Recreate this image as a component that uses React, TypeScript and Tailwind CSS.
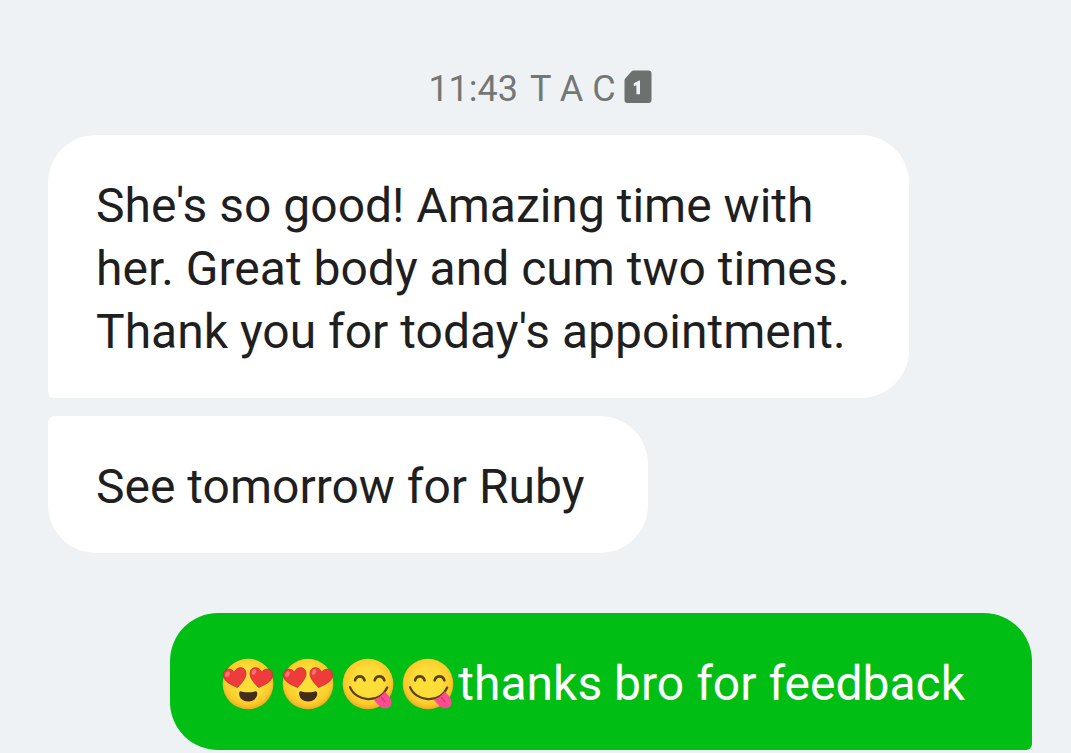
import type { ReactNode } from "react"
import { clsx } from "clsx"

type Emoji = "hearts" | "yum"

type Message = {
  id: number
  side: "in" | "out"
  lines: string[]
  emojis?: Emoji[]
  shape: string
}

const messages: Message[] = [
  {
    id: 1,
    side: "in",
    lines: [
      "She's so good! Amazing time with",
      "her. Great body and cum two times.",
      "Thank you for today's appointment.",
    ],
    shape: "rounded-[48px] rounded-bl-[6px] pr-[59px]",
  },
  {
    id: 2,
    side: "in",
    lines: ["See tomorrow for Ruby"],
    shape: "mt-[18px] rounded-[48px] rounded-tl-[6px] pr-16",
  },
  {
    id: 3,
    side: "out",
    lines: ["thanks bro for feedback"],
    emojis: ["hearts", "hearts", "yum", "yum"],
    shape: "mt-[60px] rounded-[48px] rounded-br-[6px] pr-[67px]",
  },
]

function SimIcon() {
  return (
    <svg viewBox="0 0 28 34" className="h-[34px] w-7" role="img" aria-label="SIM 1">
      <path d="M9.5 0.5H24.5Q27.5 0.5 27.5 3.5V30Q27.5 33 24.5 33H3.5Q0.5 33 0.5 30V10.5Q0.5 9.2 1.5 8.2L7.4 1.6Q8.3 0.5 9.5 0.5Z" fill="#6c706f" />
      <path d="M9.8 13.2L15.2 10.6H16V24.2H12.4V15.2L9.8 16.2Z" fill="#eef2f5" />
    </svg>
  )
}

function Face({ label, children }: { label: string; children: ReactNode }) {
  return (
    <svg viewBox="0 0 60 60" className="size-[60px] shrink-0" role="img" aria-label={label}>
      <defs>
        <radialGradient id="face" cx="0.5" cy="0.45" r="0.55">
          <stop offset="0.5" stopColor="#fddd37" />
          <stop offset="0.82" stopColor="#fccb2b" />
          <stop offset="1" stopColor="#f0a724" />
        </radialGradient>
      </defs>
      <circle cx="30" cy="30" r="25.3" fill="url(#face)" />
      {children}
    </svg>
  )
}

function HeartEyes() {
  return (
    <Face label="Smiling face with heart eyes">
      <g fill="#ee3b3b" stroke="#c92e32" strokeWidth="0.8">
        <path d="M19.5 33.5C12.5 30.5 6 27.5 5.4 21.5C4.8 15 13 12.8 16.4 18.2C18.5 11.8 28 12.3 28 19.2C28 24.8 23.5 29 19.5 33.5Z" />
        <path d="M40.5 33.5C47.5 30.5 54 27.5 54.6 21.5C55.2 15 47 12.8 43.6 18.2C41.5 11.8 32 12.3 32 19.2C32 24.8 36.5 29 40.5 33.5Z" />
      </g>
      <g fill="#f77472">
        <ellipse cx="9.5" cy="20.2" rx="2" ry="3" transform="rotate(30 9.5 20.2)" />
        <ellipse cx="36" cy="18" rx="2" ry="3" transform="rotate(25 36 18)" />
      </g>
      <path d="M23.5 37.4Q30 39.3 36.8 37.4Q39.4 36.8 39.3 39.8C38.8 44.6 35.1 47.5 30.2 47.5C25.2 47.5 21.7 44.7 21.1 40Q20.8 36.8 23.5 37.4Z" fill="#442c1b" />
    </Face>
  )
}

function Yum() {
  return (
    <Face label="Face savoring food">
      <g fill="none" stroke="#5c4018" strokeLinecap="round">
        <path d="M17 26.3C18.5 21 25 21 26.6 26.3M36.6 26.3C38.2 21 44.8 21 46.4 26.3" strokeWidth="2.6" />
        <path d="M12 33.2C17.5 47.5 41.5 50.5 49.2 33.5" strokeWidth="2.2" />
      </g>
      <path d="M35.8 45.8Q42.5 43.2 46.8 37.7C50.3 40.5 55.3 46.5 53.2 51C51.2 55.2 45.2 55.2 42 52.5Q38.6 49.3 35.8 45.8Z" fill="#fb4d8e" />
      <path d="M43.5 43.5L47 47.8" stroke="#df2f73" strokeWidth="1.3" strokeLinecap="round" />
    </Face>
  )
}

function Bubble({ message }: { message: Message }) {
  return (
    <li
      className={clsx(
        "flex max-w-full items-center pt-[39px] pb-[35px] pl-12",
        message.side === "in" ? "self-start bg-white text-[#1f1f1f]" : "self-end bg-[#00be14] text-white",
        message.shape,
      )}
    >
      {message.emojis?.map((emoji, i) => (emoji === "hearts" ? <HeartEyes key={i} /> : <Yum key={i} />))}
      <p>
        {message.lines.map((line) => (
          <span key={line} className="block whitespace-nowrap">
            {line}
          </span>
        ))}
      </p>
    </li>
  )
}

export default function App() {
  return (
    <main className="min-h-screen overflow-hidden bg-[#eef2f5] pt-[70px] pr-[39px] pb-[3px] pl-12 font-[Roboto,sans-serif]">
      <header className="flex items-start justify-center text-4xl leading-[38px] text-[#737776]">
        <time className="mr-3">11:43</time>
        <span className="mr-2">T A C</span>
        <SimIcon />
      </header>
      <ul className="mt-[27px] flex flex-col text-5xl leading-[63px]">
        {messages.map((message) => (
          <Bubble key={message.id} message={message} />
        ))}
      </ul>
    </main>
  )
}
